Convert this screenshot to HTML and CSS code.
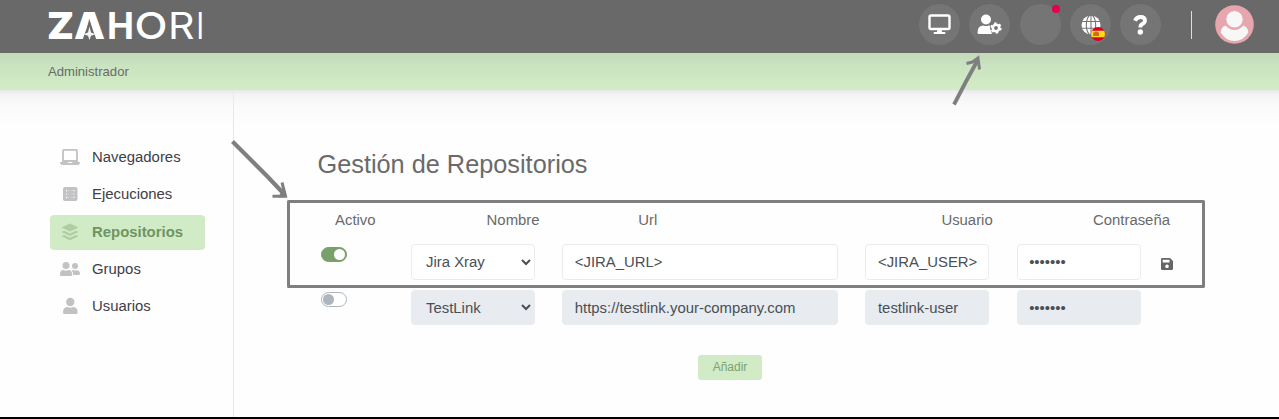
FILE: index.html
```html
<!DOCTYPE html>
<html lang="es">
<head>
<meta charset="utf-8">
<title>Zahori - Repositorios</title>
<link rel="stylesheet" href="styles.css">
</head>
<body>
<header class="topbar">
  <svg class="logo" width="166" height="53" viewBox="44 0 166 53" role="img" aria-label="ZAHORI">
    <g fill="#fff" font-size="37">
      <text class="w-black" x="47" y="39" textLength="27" lengthAdjust="spacingAndGlyphs">Z</text>
      <text class="w-black" x="74" y="39" textLength="31" lengthAdjust="spacingAndGlyphs">A</text>
      <text class="w-bold" x="107" y="39" textLength="27" lengthAdjust="spacingAndGlyphs">H</text>
      <text class="w-medium" x="134.500" y="39" textLength="33" lengthAdjust="spacingAndGlyphs">O</text>
      <text class="w-light" x="168" y="39" textLength="26.500" lengthAdjust="spacingAndGlyphs">R</text>
      <text class="w-thin" x="195.200" y="39" textLength="10" lengthAdjust="spacingAndGlyphs">I</text>
    </g>
    <path fill="#696969" d="M89.500 20.500L96.500 40H82.500z"/>
    <path fill="#f4f4f4" d="M89.500 26.500l1.500 6 4.500 1.700-4.500 1.600-1.500 4.200-1.500-4.200-4.500-1.600 4.500-1.700z"/>
  </svg>
  <nav class="actions">
    <span class="round"><svg width="23" height="21" viewBox="0 0 23 21"><rect x="1.500" y="1.500" width="20" height="13.500" rx="1.500" fill="none" stroke="#fff" stroke-width="2.400"/><path fill="#fff" d="M9.500 15h4l.5 3h2.500q1 0 1 1t-1 1h-10q-1 0-1-1t1-1H9z"/></svg></span>
    <span class="round"><svg width="25" height="21" viewBox="0 0 25 21"><circle cx="9" cy="5.500" r="5" fill="#fff"/><path fill="#fff" d="M.5 18.500q0-7 6-7 2.500 1 5 0h1.500q-1 3 1 5.500l1 3H2q-1.500 0-1.500-1.500z"/><circle cx="19" cy="14" r="3.200" fill="none" stroke="#fff" stroke-width="2.600"/><circle cx="19" cy="14" r="4.700" fill="none" stroke="#fff" stroke-width="1.900" stroke-dasharray="2.460"/></svg></span>
    <span class="round gap"><i class="alert"></i></span>
    <span class="round"><svg width="20" height="20" viewBox="0 0 20 20"><circle cx="10" cy="10" r="9.500" fill="#fff"/><g fill="none" stroke="#757575" stroke-width="1.100"><ellipse cx="10" cy="10" rx="4.700" ry="10"/><path d="M10 0v20M0 6.500h20M0 13.300h20"/></g></svg>
      <svg class="flag" width="14" height="14" viewBox="0 0 14 14"><clipPath id="f"><circle cx="7" cy="7" r="7"/></clipPath><g clip-path="url(#f)"><path fill="#d80027" d="M0 0h14v14H0z"/><path fill="#ffda1a" d="M0 3.800h14v6.400H0z"/><path fill="#d06a20" d="M2.200 5.500h1l1-1h2l1 1h.8V9H2.200z"/></g></svg></span>
    <span class="round"><svg width="15" height="20" viewBox="0 0 15 20"><path d="M2 5.700Q3.500 2 7.500 2q4.500 0 4.500 3.600 0 2-2.300 3.200Q7.300 10 7.300 12.500" fill="none" stroke="#fff" stroke-width="3.800"/><circle cx="7.300" cy="17" r="2.700" fill="#fff"/></svg></span>
  </nav>
  <span class="divider"></span>
  <svg class="avatar" width="39" height="39" viewBox="0 0 39 39"><circle cx="19.500" cy="19.500" r="19.300" fill="#e7a6ae"/><path fill="#f7f7f7" d="M10.500 20.500q9 9 18 0Q33 22 33.300 27.500q-5 8.500-13.800 8.500T5.700 27.500Q6 22 10.500 20.500z"/><circle cx="19.500" cy="14.300" r="8.700" fill="#f7f7f7" stroke="#e7a6ae"/></svg>
</header>
<div class="crumb">Administrador</div>
<div class="layout">
  <aside class="side">
    <a class="item"><svg width="20" height="16" viewBox="0 0 20 16"><path fill="none" stroke="currentColor" stroke-width="1.800" d="M3 12V1.900q0-1 1-1h12q1 0 1 1V12z"/><path fill="currentColor" d="M0 13h7.500q.2 1 1 1h3q.8 0 1-1H20q0 3-2.500 3h-15Q0 16 0 13z"/></svg>Navegadores</a>
    <a class="item"><svg width="20" height="16" viewBox="0 0 20 16"><rect x="3" y="1" width="14.500" height="14" rx="2" fill="currentColor"/><path stroke="#fff" stroke-width="1.200" stroke-dasharray="1.200 2.200" d="M6.500 4v8.500M14 4v8.500"/><path stroke="#fff" stroke-width="1.200" stroke-dasharray="1.200 2.200" d="M8.500 4v8.500M12 4v8.500" opacity=".35"/></svg>Ejecuciones</a>
    <a class="item active"><svg width="20" height="18" viewBox="0 0 20 18"><path fill="currentColor" d="M10 .5l8.500 4-8.500 4-8.500-4zM1.500 9l2.500-1.300 6 2.800 6-2.800L18.500 9 10 13zM1.500 13.300L4 12l6 2.800 6-2.800 2.500 1.300-8.500 4z"/></svg>Repositorios</a>
    <a class="item"><svg width="20" height="16" viewBox="0 0 20 16"><g fill="currentColor"><circle cx="6" cy="4.500" r="3.500"/><path d="M0 14v-1q0-4 3.500-4 2.500 1 5 0Q12 9 12 13v1q0 1-1 1H1q-1 0-1-1z"/><circle cx="15" cy="5" r="3"/><path d="M11.700 9.500q1.300-1 3.300 0 5-1 5 3.500 0 1-1 1h-6q.3-3-1.300-4.500z"/></g></svg>Grupos</a>
    <a class="item"><svg width="20" height="18" viewBox="0 0 20 18"><g fill="currentColor"><circle cx="10.300" cy="5" r="4.200"/><path d="M3 15.500q0-5.500 4.500-5.500 3 1.300 5.600 0 4.500 0 4.500 5.500 0 1.500-1.500 1.500H4.500q-1.500 0-1.500-1.500z"/></g></svg>Usuarios</a>
  </aside>
  <main class="content">
    <h1>Gestión de Repositorios</h1>
    <div class="row head"><span>Activo</span><span>Nombre</span><span>Url</span><span>Usuario</span><span>Contraseña</span></div>
    <div class="row">
      <i class="switch on"></i>
      <select class="field"><option>Jira Xray</option></select>
      <input class="field" value="&lt;JIRA_URL&gt;">
      <input class="field" value="&lt;JIRA_USER&gt;">
      <input class="field" type="password" value="secreto">
      <svg class="save" width="12" height="12" viewBox="0 0 12 12"><path fill="#666" fill-rule="evenodd" d="M1.300 0H9l3 3v7.700q0 1.300-1.300 1.300H1.300Q0 12 0 10.700V1.300Q0 0 1.300 0zM1.700 1.700V4.500H8.500V1.700zM6 6.500a1.800 1.800 0 1 0 .01 0z"/></svg>
    </div>
    <div class="row second">
      <i class="switch"></i>
      <select class="field" disabled><option>TestLink</option></select>
      <input class="field" value="https://testlink.your-company.com" disabled>
      <input class="field" value="testlink-user" disabled>
      <input class="field" type="password" value="secreto" disabled>
    </div>
    <button class="add">Añadir</button>
  </main>
</div>
<svg class="marks" width="1279" height="419" viewBox="0 0 1279 419" fill="none" stroke="#7f7f7f" stroke-width="3">
  <rect x="288.500" y="201.500" width="915" height="85" stroke-linejoin="round"/>
  <path stroke-width="4.200" d="M232.500 141.500L267 176l17 18"/>
  <path d="M282 182.500l3.500 13.500-13 .2"/><path fill="#7f7f7f" stroke="none" d="M284 187l2.500 10.500H278z"/>
  <path stroke-width="3.800" d="M954 104.500l12-23 11.500-21"/>
  <path d="M966.500 63.500l6-1.500 5.500-4 1.500 11.500"/>
</svg>
</body>
</html>
```
FILE: styles.css
```css
* { box-sizing: border-box; }
body {
  margin: 0;
  height: 419px;
  display: flex;
  flex-direction: column;
  overflow: hidden;
  font-family: "Liberation Sans", Arial, sans-serif;
  font-size: 14.9px;
  color: #6a6a6a;
  background: #fefefe;
  border-bottom: 2px solid #000;
}
.topbar {
  flex: none;
  height: 53px;
  display: flex;
  align-items: flex-start;
  padding: 0 25px 0 44px;
  background: #696969;
}
.logo { overflow: visible; font-family: Inter, sans-serif; }
.w-black { font-weight: 900; }
.w-bold { font-weight: 700; }
.w-medium { font-weight: 500; }
.w-light { font-weight: 400; }
.w-thin { font-weight: 300; }
.actions { display: flex; gap: 9px; margin: 4px 30px 0 auto; }
.round {
  position: relative;
  width: 41px;
  height: 41px;
  border-radius: 50%;
  background: #757575;
  display: flex;
  align-items: center;
  justify-content: center;
}
.gap { margin-left: 1px; }
.alert {
  position: absolute;
  top: 1px;
  right: 1px;
  width: 8px;
  height: 8px;
  border-radius: 50%;
  background: #e6004c;
}
.flag { position: absolute; left: 21px; top: 23px; }
.divider { width: 1px; height: 28px; margin: 11px 23px 0 0; background: #dedede; }
.avatar { margin-top: 5px; }
.crumb {
  flex: none;
  height: 37px;
  padding-left: 48px;
  font-size: 13.1px;
  line-height: 38px;
  background: linear-gradient(#c2d9b9, #cae3c0 35%, #d0ebc6 85%);
}
.layout {
  flex: 1;
  display: flex;
  background: linear-gradient(#e8e8eb, #f4f4f6 5px, #fbfbfc 18px, #fefefe 36px);
}
.side {
  width: 234px;
  padding: 50px 28px 0 50px;
  border-right: 1px solid #e8e8ea;
}
.item {
  display: flex;
  align-items: center;
  gap: 12px;
  height: 35px;
  margin-bottom: 2.3px;
  padding: 0 0 1px 10px;
  color: #3f4047;
  border-radius: 4px;
}
.item svg { color: #c2c2c4; }
.active { background: #d0ebc6; color: #6f9462; font-weight: bold; }
.active svg { color: #afcda3; }
.content { flex: 1; padding: 58px 0 0 83.5px; }
h1 { margin: 0; font-size: 25.3px; font-weight: normal; line-height: 32px; }
.row {
  display: grid;
  grid-template-columns: 124px 276px 124px 124px 20px;
  column-gap: 27.2px;
  padding-left: 93.5px;
  position: relative;
}
.head {
  grid-template-columns: repeat(2, 151.600px) 303.200px 151.600px 120px;
  column-gap: 0;
  padding-left: 17.5px;
  margin-top: 31px;
  height: 33px;
  line-height: 18px;
}
.switch {
  position: absolute;
  left: 3.5px;
  top: 3px;
  width: 26px;
  height: 15px;
  border: 1px solid #adb5bd;
  border-radius: 8px;
  background: #fff;
}
.switch::after {
  content: "";
  display: block;
  width: 11px;
  height: 11px;
  margin: 1px;
  border-radius: 50%;
  background: #adb5bd;
}
.on { background: #78a069; border-color: #78a069; }
.on::after { margin-left: 12px; background: #fff; }
.field {
  width: 100%;
  height: 36px;
  padding: 0 8px 1px 11.6px;
  border: 1px solid #e9ebef;
  border-radius: 4px;
  background: #fff;
  color: #495057;
  font: 14.9px "Liberation Sans", Arial, sans-serif;
}
select.field { padding: 0 0 1px 10px; }
.field:disabled { height: 35px; padding-bottom: 0; background: #e8ebf0; color: #495057; opacity: 1; }
.second { margin-top: 10px; }
.second .switch { top: 2px; }
.save { margin: 14px 0 0 -7px; }
.add {
  display: block;
  width: 64px;
  height: 25px;
  margin: 30px 0 0 380.5px;
  padding: 0 0 2px;
  border: 0;
  border-radius: 3px;
  background: #d0ebc6;
  color: #7da36e;
  font: 12px "Liberation Sans", Arial, sans-serif;
}
.marks { position: absolute; left: 0; top: 0; pointer-events: none; }
```
